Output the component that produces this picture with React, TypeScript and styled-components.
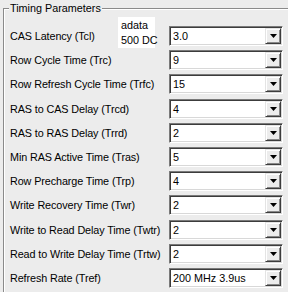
import React from "react";
import styled, { createGlobalStyle } from "styled-components";

const GlobalStyle = createGlobalStyle`
  html, body {
    margin: 0;
    padding: 0;
    background: #ececec;
    overflow: hidden;
  }
  body {
    font-family: "Liberation Sans", Arial, sans-serif;
    font-size: 10.8px;
    color: #000;
  }
`;

const Page = styled.div`
  width: 288px;
  height: 292px;
  padding: 8px 0 0 3px;
  box-sizing: border-box;
  overflow: hidden;
`;

const Group = styled.div`
  position: relative;
  border-left: 1px solid #8a8a8a;
  border-top: 1px solid #8a8a8a;
  box-shadow: inset 1px 1px 0 #ffffff;
  padding: 17px 0 0 6px;
  height: 400px;
`;

const Legend = styled.span`
  position: absolute;
  top: -7px;
  left: 5px;
  padding: 0 1px;
  background: #ececec;
  line-height: 13px;
`;

const Rows = styled.div`
  display: flex;
  flex-direction: column;
  gap: 4.2px;
`;

const Row = styled.div`
  position: relative;
  display: flex;
  align-items: center;
  height: 20px;
`;

const Label = styled.span`
  width: 159px;
  flex-shrink: 0;
  white-space: nowrap;
  letter-spacing: -0.1px;
`;

const Note = styled.div`
  position: absolute;
  top: -9px;
  left: 108px;
  width: 37px;
  height: 31px;
  padding: 1px 0 0 3px;
  box-sizing: border-box;
  background: #ffffff;
  line-height: 14.5px;
  white-space: nowrap;
`;

const Combo = styled.div`
  display: flex;
  width: 114px;
  height: 20px;
  box-sizing: border-box;
  border-style: solid;
  border-width: 1px;
  border-color: #7a7a7a #ffffff #ffffff #7a7a7a;
  box-shadow: inset 1px 1px 0 #3c3c3c, inset -1px -1px 0 #d8d8d8;
  background: #ffffff;
  padding: 1px;
`;

const Value = styled.span`
  flex: 1;
  padding-left: 2px;
  line-height: 16px;
  white-space: nowrap;
  overflow: hidden;
`;

const ArrowButton = styled.div`
  width: 16px;
  height: 16px;
  box-sizing: border-box;
  display: flex;
  align-items: center;
  justify-content: center;
  background: #ececec;
  border-style: solid;
  border-width: 1px;
  border-color: #e4e4e4 #3c3c3c #3c3c3c #e4e4e4;
  box-shadow: inset 1px 1px 0 #ffffff, inset -1px -1px 0 #888888;
`;

const Arrow = () => (
  <svg width="7" height="4" viewBox="0 0 7 4">
    <polygon points="0,0 7,0 3.5,4" fill="#000" />
  </svg>
);

const params: [string, string][] = [
  ["CAS Latency (Tcl)", "3.0"],
  ["Row Cycle Time (Trc)", "9"],
  ["Row Refresh Cycle Time (Trfc)", "15"],
  ["RAS to CAS Delay (Trcd)", "4"],
  ["RAS to RAS Delay (Trrd)", "2"],
  ["Min RAS Active Time (Tras)", "5"],
  ["Row Precharge Time (Trp)", "4"],
  ["Write Recovery Time (Twr)", "2"],
  ["Write to Read Delay Time (Twtr)", "2"],
  ["Read to Write Delay Time (Trtw)", "2"],
  ["Refresh Rate (Tref)", "200 MHz 3.9us"],
];

const App = () => {
  return (
    <>
      <GlobalStyle />
      <Page>
        <Group>
          <Legend>Timing Parameters</Legend>
          <Rows>
            {params.map(([label, value], i) => (
              <Row key={label}>
                <Label>{label}</Label>
                {i === 0 && (
                  <Note>
                    adata
                    <br />
                    500 DC
                  </Note>
                )}
                <Combo>
                  <Value>{value}</Value>
                  <ArrowButton>
                    <Arrow />
                  </ArrowButton>
                </Combo>
              </Row>
            ))}
          </Rows>
        </Group>
      </Page>
    </>
  );
};

export default App;
